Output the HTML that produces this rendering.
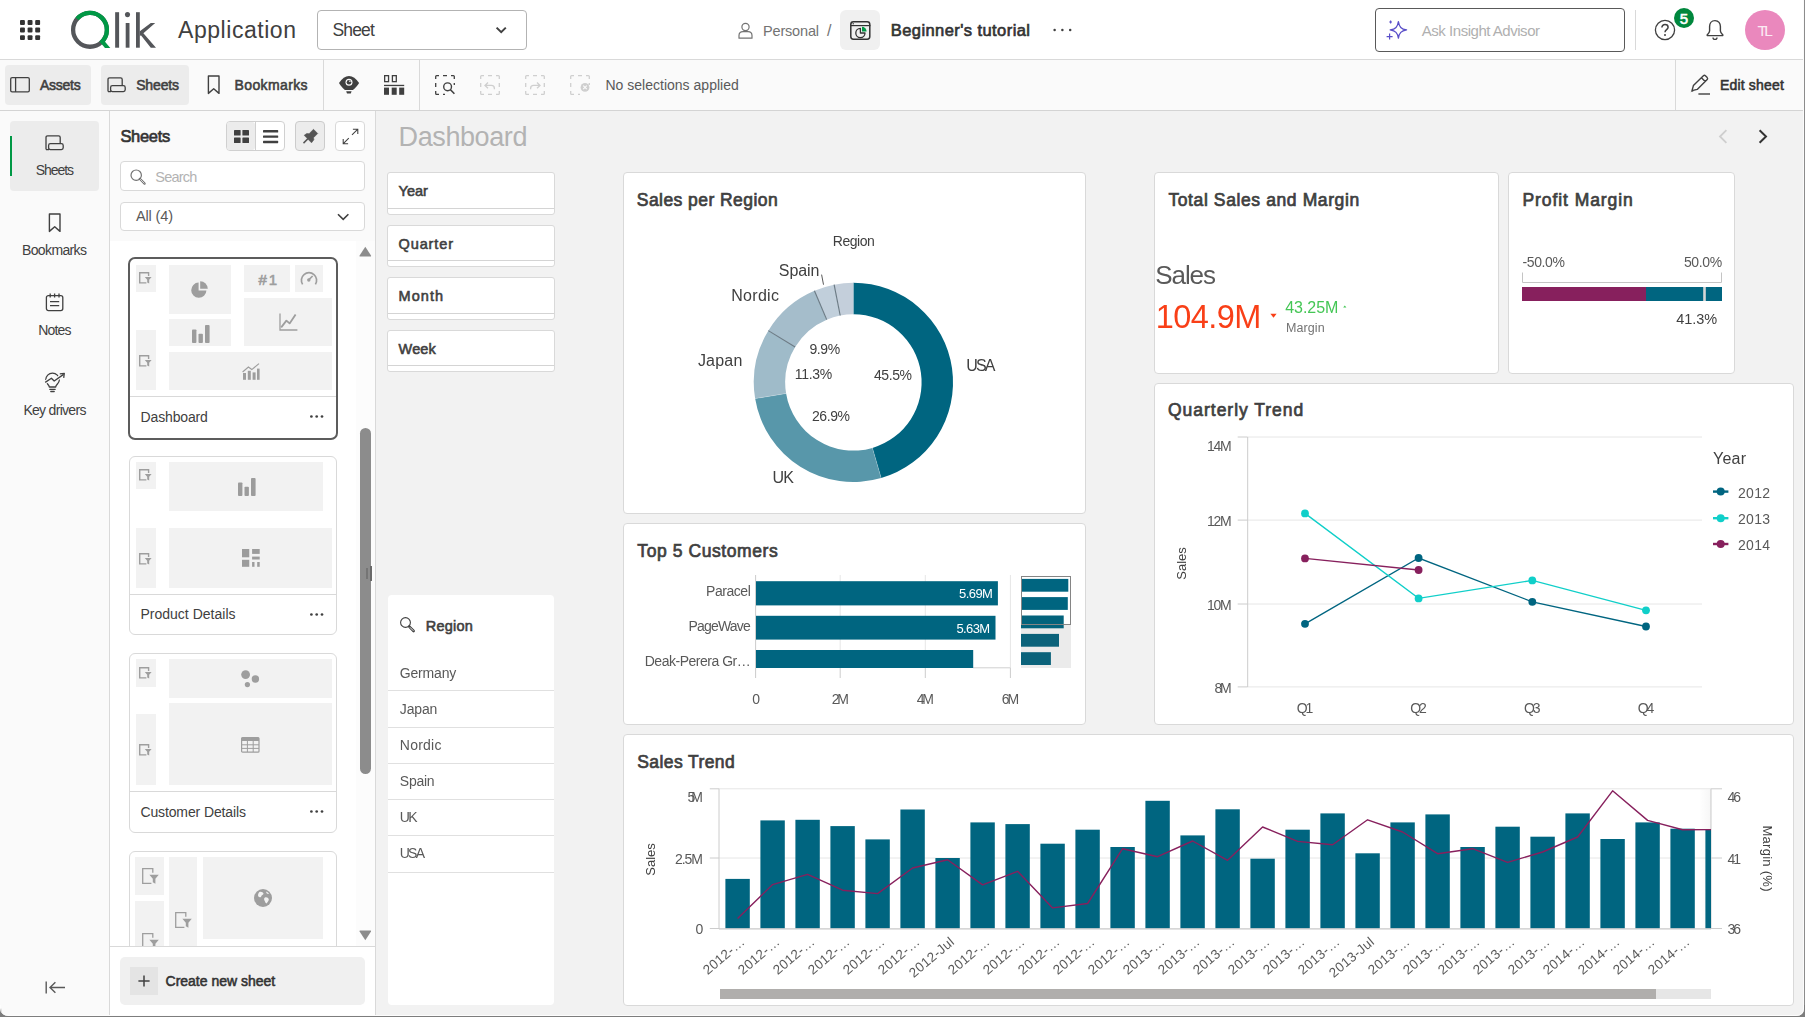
<!DOCTYPE html>
<html lang="en"><head><meta charset="utf-8"><title>Qlik Sense - Beginner's tutorial - Dashboard</title>
<style>
html,body{margin:0;padding:0;background:#f2f2f2;}
body{width:1805px;height:1017px;overflow:hidden;font-family:"Liberation Sans",sans-serif;}
#root{position:relative;width:1805px;height:1017px;overflow:hidden;background:#f2f2f2;}
.a{position:absolute;display:block;}
.t{position:absolute;white-space:nowrap;display:block;}
.g{position:absolute;left:0;top:0;width:1805px;height:1017px;will-change:transform;pointer-events:none;}
svg{overflow:visible;}
</style></head><body><div id="root">
<div class="a" style="left:0px;top:0px;width:1805px;height:59px;background:#ffffff;"></div>
<div class="a" style="left:0px;top:59px;width:1805px;height:1px;background:#d9d9d9;"></div>
<div class="a" style="left:0px;top:60px;width:1805px;height:50px;background:#fafafa;"></div>
<div class="a" style="left:0px;top:110px;width:1805px;height:1px;background:#d4d4d4;"></div>
<div class="a" style="left:0px;top:111px;width:109px;height:906px;background:#fafafa;"></div>
<div class="a" style="left:109px;top:111px;width:1px;height:906px;background:#d9d9d9;"></div>
<div class="a" style="left:110px;top:111px;width:265px;height:130px;background:#fafafa;"></div>
<div class="a" style="left:110px;top:241px;width:265px;height:705px;background:#ffffff;"></div>
<div class="a" style="left:356px;top:241px;width:19px;height:705px;background:#fcfcfc;"></div>
<div class="a" style="left:110px;top:946px;width:265px;height:1px;background:#d9d9d9;"></div>
<div class="a" style="left:110px;top:947px;width:265px;height:70px;background:#ffffff;"></div>
<div class="a" style="left:375px;top:111px;width:1px;height:906px;background:#d9d9d9;"></div>
<svg class="a" style="left:20px;top:20px;" width="21" height="21" viewBox="0 0 21 21"><rect x="0.0" y="0.0" width="4.9" height="4.9" rx="1" fill="#333"/><rect x="7.6" y="0.0" width="4.9" height="4.9" rx="1" fill="#333"/><rect x="15.2" y="0.0" width="4.9" height="4.9" rx="1" fill="#333"/><rect x="0.0" y="7.6" width="4.9" height="4.9" rx="1" fill="#333"/><rect x="7.6" y="7.6" width="4.9" height="4.9" rx="1" fill="#333"/><rect x="15.2" y="7.6" width="4.9" height="4.9" rx="1" fill="#333"/><rect x="0.0" y="15.2" width="4.9" height="4.9" rx="1" fill="#333"/><rect x="7.6" y="15.2" width="4.9" height="4.9" rx="1" fill="#333"/><rect x="15.2" y="15.2" width="4.9" height="4.9" rx="1" fill="#333"/></svg>
<svg class="a" style="left:0px;top:0px;" width="170" height="59" viewBox="0 0 170 59">
<circle cx="90.0" cy="29.83" r="16.9" fill="none" stroke="#54565a" stroke-width="4.3"/>
<path d="M77.05 18.97 A16.9 16.9 0 1 1 100.86 42.78" fill="none" stroke="#009845" stroke-width="4.3"/>
<path d="M99.3 41.3 L104.6 41.3 L110.3 47.9 L105.0 47.9 Z" fill="#009845"/>
<rect x="115.15" y="12.2" width="3.95" height="35.5" fill="#54565a"/>
<rect x="125.7" y="23" width="3.8" height="24.7" fill="#54565a"/>
<circle cx="127.5" cy="14.6" r="2.55" fill="#54565a"/>
<rect x="136.0" y="12.2" width="3.8" height="35.5" fill="#54565a"/>
<path d="M139.8 31.3 L150.8 23 L155.2 23 L143.4 33.2 L156 47.7 L150.8 47.7 L140.9 35.3 L139.8 36.2 Z" fill="#54565a"/>
</svg>
<span class="t" style="left:178.00px;top:18.75px;font-size:23px;line-height:23px;color:#404040;letter-spacing:0.548px;">Application</span>
<div class="a" style="left:317px;top:10px;width:210px;height:40px;background:#ffffff;border:1px solid #b3b3b3;box-sizing:border-box;border-radius:4px;"></div>
<span class="t" style="left:332.40px;top:21.50px;font-size:17.5px;line-height:17.5px;color:#404040;letter-spacing:-0.833px;">Sheet</span>
<svg class="a" style="left:494px;top:25px;" width="14" height="10" viewBox="0 0 14 10"><path d="M2.6 2.6 L7.2 7.2 L11.8 2.6" fill="none" stroke="#404040" stroke-width="2" stroke-linejoin="miter"/></svg>
<svg class="a" style="left:737px;top:21px;" width="17" height="19" viewBox="0 0 17 19"><circle cx="8.5" cy="6" r="3.6" fill="none" stroke="#737373" stroke-width="1.2"/><path d="M2 17.2 V14.6 Q2 10.6 6 10.6 H11 Q15 10.6 15 14.6 V17.2 Z" fill="none" stroke="#737373" stroke-width="1.2" stroke-linejoin="round"/></svg>
<span class="t" style="left:763.00px;top:24.00px;font-size:14.5px;line-height:14.5px;color:#737373;letter-spacing:-0.176px;">Personal</span>
<span class="t" style="left:827.00px;top:22.75px;font-size:16px;line-height:16px;color:#737373;">/</span>
<div class="a" style="left:840px;top:10px;width:40px;height:40px;background:#f0f0f0;border-radius:6px;"></div>
<svg class="a" style="left:849.6px;top:21px;" width="21" height="19" viewBox="0 0 21 19"><rect x="0.8" y="0.8" width="19" height="17.4" rx="2.6" fill="none" stroke="#333" stroke-width="1.5"/>
<path d="M1 4.6 H20.4" stroke="#333" stroke-width="1.2"/>
<circle cx="3.2" cy="2.8" r="0.7" fill="#333"/>
<path d="M10.4 7.4 A4.6 4.6 0 1 0 15 12 L10.4 12 Z" fill="none" stroke="#333" stroke-width="1.3" stroke-linejoin="round"/>
<path d="M12 5.8 L12 10.4 L16.6 10.4 A4.6 4.6 0 0 0 12 5.8 Z" fill="#009845"/></svg>
<span class="t" style="left:890.80px;top:22.00px;font-size:16.5px;line-height:16.5px;color:#333333;-webkit-text-stroke:0.66px #333333;letter-spacing:0.424px;">Beginner's tutorial</span>
<svg class="a" style="left:1053px;top:28px;" width="20" height="4" viewBox="0 0 20 4"><circle cx="1.6" cy="2" r="1.25" fill="#404040"/><circle cx="9.4" cy="2" r="1.25" fill="#404040"/><circle cx="17.2" cy="2" r="1.25" fill="#404040"/></svg>
<div class="a" style="left:1375px;top:8px;width:250px;height:44px;background:#ffffff;border:1px solid #595959;box-sizing:border-box;border-radius:4px;"></div>
<svg class="a" style="left:1385.7px;top:20px;" width="22" height="21" viewBox="0 0 22 21"><path d="M12.4 1.6 C13.2 7 15.2 9 20.6 9.9 C15.2 10.8 13.2 12.8 12.4 18.2 C11.6 12.8 9.6 10.8 4.2 9.9 C9.6 9 11.6 7 12.4 1.6 Z" fill="none" stroke="#5a4fc9" stroke-width="1.3" stroke-linejoin="round"/>
<path d="M3.6 13.6 V19.6 M0.6 16.6 H6.6" stroke="#5a4fc9" stroke-width="1.2"/>
<path d="M4.6 0.6 V3.4 M3.2 2 H6" stroke="#5a4fc9" stroke-width="1.1"/></svg>
<span class="t" style="left:1421.80px;top:23.25px;font-size:15px;line-height:15px;color:#b0b0b0;letter-spacing:-0.474px;">Ask Insight Advisor</span>
<div class="a" style="left:1635px;top:10px;width:1px;height:40px;background:#d9d9d9;"></div>
<svg class="a" style="left:1654px;top:19px;" width="22" height="22" viewBox="0 0 22 22"><circle cx="11" cy="11" r="9.6" fill="none" stroke="#404040" stroke-width="1.3"/><path d="M7.9 8.6 C7.9 6.6 9.3 5.6 11 5.6 C12.8 5.6 14.1 6.7 14.1 8.3 C14.1 10.6 11 10.7 11 13.2" fill="none" stroke="#404040" stroke-width="1.5"/><circle cx="11" cy="16" r="1" fill="#404040"/></svg>
<svg class="a" style="left:1674px;top:8px;" width="20" height="20" viewBox="0 0 20 20"><circle cx="10" cy="10" r="10" fill="#00873d"/></svg>
<span class="t" style="left:1679.80px;top:11.25px;font-size:15px;line-height:15px;color:#ffffff;-webkit-text-stroke:0.60px #ffffff;">5</span>
<svg class="a" style="left:1705px;top:19px;" width="20" height="22" viewBox="0 0 20 22"><path d="M10 1.6 C6.4 1.6 4.6 4.4 4.6 7.6 V12 C4.6 13.6 3.4 14.6 2.2 15.8 V16.6 H17.8 V15.8 C16.6 14.6 15.4 13.6 15.4 12 V7.6 C15.4 4.4 13.6 1.6 10 1.6 Z" fill="none" stroke="#404040" stroke-width="1.4" stroke-linejoin="round"/><path d="M8 18.4 A2 2 0 0 0 12 18.4" fill="none" stroke="#404040" stroke-width="1.3"/></svg>
<svg class="a" style="left:1745px;top:10px;" width="40" height="40" viewBox="0 0 40 40"><circle cx="20" cy="20" r="20" fill="#ea88bd"/></svg>
<span class="t" style="left:1757.60px;top:23.00px;font-size:15.5px;line-height:15.5px;color:#fbeaf3;letter-spacing:-2.689px;">TL</span>
<div class="a" style="left:5px;top:65px;width:86px;height:40px;background:#ececec;border-radius:4px;"></div>
<div class="a" style="left:101px;top:65px;width:88px;height:40px;background:#ececec;border-radius:4px;"></div>
<svg class="a" style="left:10px;top:77px;" width="20" height="16" viewBox="0 0 20 16"><rect x="0.7" y="0.7" width="18.6" height="14.2" rx="1.4" fill="none" stroke="#404040" stroke-width="1.3"/><path d="M5.6 0.7 V14.9" stroke="#404040" stroke-width="1.3"/></svg>
<span class="t" style="left:40.00px;top:78.25px;font-size:14px;line-height:14px;color:#404040;-webkit-text-stroke:0.56px #404040;letter-spacing:-0.263px;">Assets</span>
<svg class="a" style="left:105.5px;top:77px;" width="21" height="16" viewBox="0 0 21 16"><path d="M2 14.6 V2.4 Q2 0.8 3.6 0.8 H14.6 Q16.2 0.8 16.2 2.4 V8.4" fill="none" stroke="#404040" stroke-width="1.3"/><rect x="4.6" y="8.6" width="14.6" height="6" rx="1.8" fill="#ececec" stroke="#404040" stroke-width="1.3"/><path d="M2 14.6 H5" stroke="#404040" stroke-width="1.3"/></svg>
<span class="t" style="left:136.20px;top:78.25px;font-size:14px;line-height:14px;color:#404040;-webkit-text-stroke:0.56px #404040;letter-spacing:-0.157px;">Sheets</span>
<svg class="a" style="left:207px;top:75px;" width="14" height="20" viewBox="0 0 14 20"><path d="M1.4 1 H12 V18.4 L6.7 13.8 L1.4 18.4 Z" fill="none" stroke="#404040" stroke-width="1.4" stroke-linejoin="round"/></svg>
<span class="t" style="left:234.60px;top:78.25px;font-size:14px;line-height:14px;color:#404040;-webkit-text-stroke:0.56px #404040;letter-spacing:0.372px;">Bookmarks</span>
<div class="a" style="left:323px;top:60px;width:1px;height:50px;background:#d9d9d9;"></div>
<div class="a" style="left:419px;top:60px;width:1px;height:50px;background:#d9d9d9;"></div>
<svg class="a" style="left:339px;top:76px;" width="21" height="19" viewBox="0 0 21 19"><path d="M0 6.9 C3 2.4 6.4 0 10 0 C13.6 0 17 2.4 20.1 6.9 C18.4 9.6 16.4 12 13.9 13.9 H5.9 C3.6 12 1.6 9.6 0 6.9 Z" fill="#404040"/>
<circle cx="10" cy="6.3" r="3.5" fill="#fafafa"/><circle cx="10" cy="6.3" r="2.3" fill="#404040"/><circle cx="10.9" cy="5.3" r="0.8" fill="#fafafa"/>
<path d="M7.2 15.2 H12.6 L11.8 17.6 H8 Z" fill="#404040"/></svg>
<svg class="a" style="left:384px;top:75.2px;" width="21" height="20" viewBox="0 0 21 20"><rect x="0.65" y="0.65" width="3.9" height="6" fill="none" stroke="#404040" stroke-width="1.3"/><rect x="8.4" y="0.65" width="3.9" height="6" fill="none" stroke="#404040" stroke-width="1.3"/>
<rect x="0" y="9.8" width="20.2" height="1.3" fill="#404040"/>
<rect x="0" y="12.6" width="5" height="7.2" fill="#404040"/><rect x="7.7" y="12.6" width="5" height="7.2" fill="#404040"/><rect x="15.2" y="12.6" width="5" height="7.2" fill="#404040"/></svg>
<svg class="a" style="left:434.6px;top:75px;" width="21" height="21" viewBox="0 0 21 21"><path d="M0.7 4 V1.6 Q0.7 0.7 1.6 0.7 H4 M8 0.7 H12 M16 0.7 H18.4 Q19.3 0.7 19.3 1.6 V4 M0.7 8 V12 M19.3 8 V10 M0.7 16 V18.4 Q0.7 19.3 1.6 19.3 H4 M8 19.3 H10" fill="none" stroke="#404040" stroke-width="1.3"/><circle cx="12.6" cy="11.8" r="3.9" fill="none" stroke="#404040" stroke-width="1.4"/><path d="M15.5 14.8 L19.4 18.8" stroke="#404040" stroke-width="1.6"/></svg>
<svg class="a" style="left:480px;top:75px;" width="21" height="21" viewBox="0 0 21 21"><path d="M0.7 4 V1.6 Q0.7 0.7 1.6 0.7 H4 M8 0.7 H12 M16 0.7 H18.4 Q19.3 0.7 19.3 1.6 V4 M0.7 8 V12 M19.3 8 V12 M0.7 16 V18.4 Q0.7 19.3 1.6 19.3 H4 M8 19.3 H12 M16 19.3 H18.4 Q19.3 19.3 19.3 18.4 V16" fill="none" stroke="#cfcfcf" stroke-width="1.3"/><path d="M8 7.6 L5 10.4 L8 13.2 M5.2 10.4 H11.4 Q14.4 10.4 14.4 13.4 V14.2" fill="none" stroke="#cfcfcf" stroke-width="1.3"/></svg>
<svg class="a" style="left:525px;top:75px;" width="21" height="21" viewBox="0 0 21 21"><path d="M0.7 4 V1.6 Q0.7 0.7 1.6 0.7 H4 M8 0.7 H12 M16 0.7 H18.4 Q19.3 0.7 19.3 1.6 V4 M0.7 8 V12 M19.3 8 V12 M0.7 16 V18.4 Q0.7 19.3 1.6 19.3 H4 M8 19.3 H12 M16 19.3 H18.4 Q19.3 19.3 19.3 18.4 V16" fill="none" stroke="#cfcfcf" stroke-width="1.3"/><path d="M12 7.6 L15 10.4 L12 13.2 M14.8 10.4 H8.6 Q5.6 10.4 5.6 13.4 V14.2" fill="none" stroke="#cfcfcf" stroke-width="1.3"/></svg>
<svg class="a" style="left:570px;top:75px;" width="21" height="21" viewBox="0 0 21 21"><path d="M0.7 4 V1.6 Q0.7 0.7 1.6 0.7 H4 M8 0.7 H12 M16 0.7 H18.4 Q19.3 0.7 19.3 1.6 V4 M0.7 8 V12 M19.3 8 V10 M0.7 16 V18.4 Q0.7 19.3 1.6 19.3 H4 M8 19.3 H10" fill="none" stroke="#cfcfcf" stroke-width="1.3"/><circle cx="15" cy="12.4" r="4.4" fill="#cfcfcf"/><path d="M13.2 10.6 L16.8 14.2 M16.8 10.6 L13.2 14.2" stroke="#fafafa" stroke-width="1.2"/></svg>
<span class="t" style="left:605.40px;top:78.25px;font-size:14px;line-height:14px;color:#595959;letter-spacing:0.016px;">No selections applied</span>
<div class="a" style="left:1675px;top:60px;width:1px;height:50px;background:#d9d9d9;"></div>
<svg class="a" style="left:1689px;top:74px;" width="22" height="22" viewBox="0 0 22 22"><path d="M3 16.6 L4.4 11.6 L14.4 1.8 Q15.4 0.9 16.4 1.8 L18.2 3.6 Q19.1 4.6 18.2 5.6 L8.2 15.4 Z M12.4 3.8 L16.2 7.6" fill="none" stroke="#404040" stroke-width="1.4" stroke-linejoin="round"/><path d="M1.4 18.2 L3.4 16.4 L4.6 17.2 Z" fill="#404040"/><path d="M9.4 20 H21" stroke="#404040" stroke-width="1.4"/></svg>
<span class="t" style="left:1720.00px;top:78.25px;font-size:14px;line-height:14px;color:#333333;-webkit-text-stroke:0.56px #333333;letter-spacing:0.171px;">Edit sheet</span>
<div class="a" style="left:10px;top:121px;width:89px;height:70px;background:#ececec;border-radius:4px;"></div>
<div class="a" style="left:10px;top:136px;width:2px;height:40px;background:#009845;"></div>
<svg class="a" style="left:43.5px;top:135px;" width="21" height="16" viewBox="0 0 21 16"><path d="M2 14.6 V2.4 Q2 0.8 3.6 0.8 H14.6 Q16.2 0.8 16.2 2.4 V8.4" fill="none" stroke="#404040" stroke-width="1.3"/><rect x="4.6" y="8.6" width="14.6" height="6" rx="1.8" fill="#ececec" stroke="#404040" stroke-width="1.3"/><path d="M2 14.6 H5" stroke="#404040" stroke-width="1.3"/></svg>
<span class="t" style="left:35.70px;top:163.25px;font-size:14px;line-height:14px;color:#404040;letter-spacing:-1.057px;">Sheets</span>
<svg class="a" style="left:48.2px;top:213px;" width="14" height="20" viewBox="0 0 14 20"><path d="M1.4 1 H12 V18.4 L6.7 13.8 L1.4 18.4 Z" fill="none" stroke="#404040" stroke-width="1.4" stroke-linejoin="round"/></svg>
<span class="t" style="left:22.00px;top:243.25px;font-size:14px;line-height:14px;color:#404040;letter-spacing:-0.628px;">Bookmarks</span>
<svg class="a" style="left:45.4px;top:293px;" width="20" height="19" viewBox="0 0 20 19"><rect x="1.4" y="2.6" width="16.4" height="15" rx="2" fill="none" stroke="#404040" stroke-width="1.3"/>
<path d="M5.2 0.6 V4.4 M9.6 0.6 V4.4 M14 0.6 V4.4" stroke="#404040" stroke-width="1.3"/>
<path d="M5 8.6 H14.2 M5 12.6 H14.2" stroke="#404040" stroke-width="1.3"/></svg>
<span class="t" style="left:38.30px;top:323.25px;font-size:14px;line-height:14px;color:#404040;letter-spacing:-0.868px;">Notes</span>
<svg class="a" style="left:44px;top:372px;" width="22" height="21" viewBox="0 0 22 21"><path d="M5.3 15 C5.3 12.6 1.7 11.6 1.7 7.9 A6.8 6.8 0 0 1 15.3 7.9 C15.3 11.6 11.7 12.6 11.7 15 Z" fill="none" stroke="#404040" stroke-width="1.3" stroke-linejoin="round"/>
<path d="M5.8 17.3 H11.2 M6.8 19.5 H10.2" stroke="#404040" stroke-width="1.3" stroke-linecap="round"/>
<path d="M0.6 10.8 L7.4 6.2 L10.2 9 L19.8 2.3" fill="none" stroke="#fafafa" stroke-width="3.6"/>
<path d="M1.2 10.4 L7.4 6.2 L10.2 9 L19.6 2.4" fill="none" stroke="#404040" stroke-width="1.3" stroke-linejoin="round"/>
<path d="M15.8 1.8 L20.3 1.4 L19.7 5.9" fill="none" stroke="#404040" stroke-width="1.3" stroke-linejoin="round"/></svg>
<span class="t" style="left:23.40px;top:403.25px;font-size:14px;line-height:14px;color:#404040;letter-spacing:-0.702px;">Key drivers</span>
<svg class="a" style="left:45px;top:981px;" width="21" height="13" viewBox="0 0 21 13"><path d="M1.2 0.6 V12.4" stroke="#595959" stroke-width="1.4"/><path d="M20 6.5 H5 M10.4 1.2 L5 6.5 L10.4 11.8" fill="none" stroke="#595959" stroke-width="1.4"/></svg>
<span class="t" style="left:120.40px;top:128.00px;font-size:16.5px;line-height:16.5px;color:#333333;-webkit-text-stroke:0.66px #333333;letter-spacing:-0.294px;">Sheets</span>
<div class="a" style="left:226px;top:121px;width:59px;height:30px;background:#ffffff;border:1px solid #d0d0d0;box-sizing:border-box;border-radius:4px;"></div>
<div class="a" style="left:227px;top:122px;width:28px;height:28px;background:#ececec;border-radius:3px;"></div>
<div class="a" style="left:255px;top:122px;width:1px;height:28px;background:#d0d0d0;"></div>
<svg class="a" style="left:234px;top:130px;" width="15" height="13" viewBox="0 0 15 13"><rect x="0" y="0" width="6.6" height="5.6" rx="0.6" fill="#404040"/><rect x="8.4" y="0" width="6.6" height="5.6" rx="0.6" fill="#404040"/><rect x="0" y="7.4" width="6.6" height="5.6" rx="0.6" fill="#404040"/><rect x="8.4" y="7.4" width="6.6" height="5.6" rx="0.6" fill="#404040"/></svg>
<svg class="a" style="left:262.8px;top:130px;" width="16" height="14" viewBox="0 0 16 14"><rect x="0" y="0.1" width="15.2" height="2.4" rx="0.6" fill="#404040"/><rect x="0" y="5.4" width="15.2" height="2.4" rx="0.6" fill="#404040"/><rect x="0" y="10.8" width="15.2" height="2.4" rx="0.6" fill="#404040"/></svg>
<div class="a" style="left:295px;top:121px;width:30px;height:30px;background:#ececec;border:1px solid #cccccc;box-sizing:border-box;border-radius:4px;"></div>
<svg class="a" style="left:290px;top:118px;" width="40" height="36" viewBox="0 0 40 36"><path d="M14.2 17.3 L16.8 15.5 L19.1 15.7 L23.5 11.3 L27.7 15.5 L23.5 19.7 L23.9 21.7 L21.5 24.8 Z" fill="#555555" stroke="#555555" stroke-width="0.6" stroke-linejoin="round"/>
<path d="M13.5 25.1 L18 20.6" stroke="#555555" stroke-width="1.5"/></svg>
<div class="a" style="left:335px;top:121px;width:30px;height:30px;background:#ffffff;border:1px solid #d9d9d9;box-sizing:border-box;border-radius:4px;"></div>
<svg class="a" style="left:290px;top:118px;" width="80" height="36" viewBox="0 0 80 36"><path d="M62.0 16.9 L67.6 11.3 M62.9 11.2 H67.8 V16.0" fill="none" stroke="#404040" stroke-width="1.05"/><path d="M58.8 20.1 L53.3 25.6 M53.2 21.0 V25.8 H58.1" fill="none" stroke="#404040" stroke-width="1.05"/></svg>
<div class="a" style="left:120px;top:161px;width:245px;height:30px;background:#ffffff;border:1px solid #d9d9d9;box-sizing:border-box;border-radius:4px;"></div>
<svg class="a" style="left:129.6px;top:168.8px;" width="16" height="16" viewBox="0 0 16 16"><circle cx="6.2" cy="6.2" r="5.2" fill="none" stroke="#737373" stroke-width="1.2"/><path d="M9.8 9.8 L14.6 14.6" stroke="#737373" stroke-width="2.2" stroke-linecap="round"/><path d="M10.2 10.2 L14.4 14.4" stroke="#fff" stroke-width="0.7"/></svg>
<span class="t" style="left:155.30px;top:170.00px;font-size:14.5px;line-height:14.5px;color:#b3b3b3;letter-spacing:-0.789px;">Search</span>
<div class="a" style="left:120px;top:202px;width:245px;height:29px;background:#ffffff;border:1px solid #d9d9d9;box-sizing:border-box;border-radius:4px;"></div>
<span class="t" style="left:136.00px;top:209.00px;font-size:14.5px;line-height:14.5px;color:#595959;letter-spacing:-0.144px;">All (4)</span>
<svg class="a" style="left:336.5px;top:212.6px;" width="13" height="8" viewBox="0 0 13 8"><path d="M1 1.2 L6.2 6.4 L11.4 1.2" fill="none" stroke="#404040" stroke-width="1.6"/></svg>
<svg class="a" style="left:359px;top:246px;" width="13" height="11" viewBox="0 0 13 11"><path d="M6.3 0.8 L12 9.6 Q12.4 10.6 11.4 10.6 H1.2 Q0.2 10.6 0.6 9.6 Z" fill="#8c8c8c"/></svg>
<div class="a" style="left:360px;top:428px;width:11px;height:346px;background:#8c8c8c;border-radius:5.5px;"></div>
<div class="a" style="left:366px;top:568px;width:2px;height:11px;background:#757575;"></div>
<div class="a" style="left:370px;top:566px;width:1.5px;height:15px;background:#6a6a6a;"></div>
<svg class="a" style="left:359px;top:930px;" width="13" height="11" viewBox="0 0 13 11"><path d="M6.3 10.2 L12 1.4 Q12.4 0.4 11.4 0.4 H1.2 Q0.2 0.4 0.6 1.4 Z" fill="#8c8c8c"/></svg>
<div class="a" style="left:128px;top:257px;width:210px;height:183px;background:#ffffff;border:2px solid #5c5c5c;box-sizing:border-box;border-radius:7px;"></div>
<div class="a" style="left:136px;top:265px;width:20px;height:27px;background:#f2f2f2;"></div>
<div class="a" style="left:169px;top:265px;width:62px;height:49px;background:#f2f2f2;"></div>
<div class="a" style="left:244px;top:265px;width:46px;height:27px;background:#f2f2f2;"></div>
<div class="a" style="left:295px;top:265px;width:28px;height:27px;background:#f2f2f2;"></div>
<div class="a" style="left:244px;top:298px;width:88px;height:48px;background:#f2f2f2;"></div>
<div class="a" style="left:169px;top:319px;width:62px;height:27px;background:#f2f2f2;"></div>
<div class="a" style="left:136px;top:330px;width:20px;height:60px;background:#f2f2f2;"></div>
<div class="a" style="left:169px;top:352px;width:163px;height:38px;background:#f2f2f2;"></div>
<div class="a" style="left:130px;top:396px;width:206px;height:1px;background:#d9d9d9;"></div>
<svg class="a" style="left:138.8px;top:272px;" width="13.0" height="12.0" viewBox="0 0 13 12"><path d="M9.6 4 V0.7 H0.7 V10.9 H7.4" fill="none" stroke="#9e9e9e" stroke-width="1.4"/><path d="M5.8 5 H12.6 L10.2 7.8 V11.4 L8.2 10.4 V7.8 Z" fill="#9e9e9e"/></svg>
<svg class="a" style="left:138.8px;top:355px;" width="13.0" height="12.0" viewBox="0 0 13 12"><path d="M9.6 4 V0.7 H0.7 V10.9 H7.4" fill="none" stroke="#9e9e9e" stroke-width="1.4"/><path d="M5.8 5 H12.6 L10.2 7.8 V11.4 L8.2 10.4 V7.8 Z" fill="#9e9e9e"/></svg>
<svg class="a" style="left:191px;top:281px;" width="17" height="17" viewBox="0 0 17 17"><path d="M7.6 1.6 A7.6 7.6 0 1 0 15.4 9.4 L7.6 9.4 Z" fill="#9e9e9e"/><path d="M9.2 0.2 V7.8 H16.8 A7.6 7.6 0 0 0 9.2 0.2 Z" fill="#9e9e9e"/></svg>
<span class="t" style="left:258.60px;top:272.25px;font-size:15px;line-height:15px;color:#9e9e9e;-webkit-text-stroke:0.60px #9e9e9e;letter-spacing:1.915px;">#1</span>
<svg class="a" style="left:300px;top:271px;" width="18" height="15" viewBox="0 0 18 15"><path d="M2.6 13.4 A7.6 7.6 0 1 1 15.4 13.4" fill="none" stroke="#9e9e9e" stroke-width="1.7"/><path d="M8.2 9.4 L12.6 5" stroke="#9e9e9e" stroke-width="1.6"/><circle cx="8.8" cy="9" r="1.7" fill="#9e9e9e"/></svg>
<svg class="a" style="left:279px;top:313px;" width="19" height="18" viewBox="0 0 19 18"><path d="M1 0.4 V17 H18.4" fill="none" stroke="#9e9e9e" stroke-width="1.3"/><path d="M2.2 14.4 L7.4 7.6 L10.6 10.4 L16.6 1.6" fill="none" stroke="#9e9e9e" stroke-width="1.8" stroke-linejoin="round"/></svg>
<svg class="a" style="left:191.6px;top:324.6px;" width="18" height="18" viewBox="0 0 18 18"><rect x="0" y="4.4" width="4.4" height="13.5" rx="0.9" fill="#9c9c9c"/><rect x="6.5" y="8.7" width="4.4" height="9.2" rx="0.9" fill="#9c9c9c"/><rect x="13" y="0.1" width="4.6" height="17.8" rx="0.9" fill="#9c9c9c"/></svg>
<svg class="a" style="left:241.6px;top:363.4px;" width="18" height="17" viewBox="0 0 18 17"><rect x="1" y="10" width="3" height="6.8" fill="#9e9e9e"/><rect x="5.8" y="7.8" width="3" height="9" fill="#9e9e9e"/><rect x="10.6" y="9.4" width="3" height="7.4" fill="#9e9e9e"/><rect x="15" y="5.6" width="2.6" height="11.2" fill="#9e9e9e"/><path d="M0.6 9 L6.4 4 L9.8 6.6 L17 0.6" fill="none" stroke="#9e9e9e" stroke-width="1.2"/></svg>
<span class="t" style="left:140.60px;top:410.25px;font-size:14px;line-height:14px;color:#404040;letter-spacing:-0.161px;">Dashboard</span>
<svg class="a" style="left:309.8px;top:415px;" width="14" height="3" viewBox="0 0 14 3"><circle cx="1.4" cy="1.5" r="1.35" fill="#404040"/><circle cx="6.7" cy="1.5" r="1.35" fill="#404040"/><circle cx="12" cy="1.5" r="1.35" fill="#404040"/></svg>
<div class="a" style="left:129px;top:456px;width:208px;height:179px;background:#ffffff;border:1px solid #d9d9d9;box-sizing:border-box;border-radius:6px;"></div>
<div class="a" style="left:136px;top:462px;width:20px;height:27px;background:#f2f2f2;"></div>
<div class="a" style="left:169px;top:462px;width:154px;height:49px;background:#f2f2f2;"></div>
<div class="a" style="left:136px;top:528px;width:20px;height:60px;background:#f2f2f2;"></div>
<div class="a" style="left:169px;top:528px;width:163px;height:60px;background:#f2f2f2;"></div>
<div class="a" style="left:130px;top:594px;width:206px;height:1px;background:#d9d9d9;"></div>
<svg class="a" style="left:138.7px;top:469.4px;" width="13.0" height="12.0" viewBox="0 0 13 12"><path d="M9.6 4 V0.7 H0.7 V10.9 H7.4" fill="none" stroke="#9e9e9e" stroke-width="1.4"/><path d="M5.8 5 H12.6 L10.2 7.8 V11.4 L8.2 10.4 V7.8 Z" fill="#9e9e9e"/></svg>
<svg class="a" style="left:138.7px;top:553px;" width="13.0" height="12.0" viewBox="0 0 13 12"><path d="M9.6 4 V0.7 H0.7 V10.9 H7.4" fill="none" stroke="#9e9e9e" stroke-width="1.4"/><path d="M5.8 5 H12.6 L10.2 7.8 V11.4 L8.2 10.4 V7.8 Z" fill="#9e9e9e"/></svg>
<svg class="a" style="left:238px;top:478px;" width="18" height="18" viewBox="0 0 18 18"><rect x="0" y="4.4" width="4.4" height="13.5" rx="0.9" fill="#9c9c9c"/><rect x="6.5" y="8.7" width="4.4" height="9.2" rx="0.9" fill="#9c9c9c"/><rect x="13" y="0.1" width="4.6" height="17.8" rx="0.9" fill="#9c9c9c"/></svg>
<svg class="a" style="left:241.8px;top:548.9px;" width="18" height="18" viewBox="0 0 18 18"><rect x="0" y="0" width="7.25" height="8.3" fill="#9c9c9c"/><rect x="0" y="10.8" width="7.25" height="7" fill="#9c9c9c"/><rect x="10.1" y="0" width="7.6" height="4.9" fill="#9c9c9c"/><rect x="10.1" y="7.6" width="7.6" height="2.9" fill="#9c9c9c"/><rect x="10.1" y="13" width="2.4" height="4.8" fill="#9c9c9c"/><rect x="15.2" y="13" width="2.5" height="4.8" fill="#9c9c9c"/></svg>
<span class="t" style="left:140.40px;top:607.25px;font-size:14px;line-height:14px;color:#404040;letter-spacing:0.019px;">Product Details</span>
<svg class="a" style="left:309.8px;top:613px;" width="14" height="3" viewBox="0 0 14 3"><circle cx="1.4" cy="1.5" r="1.35" fill="#404040"/><circle cx="6.7" cy="1.5" r="1.35" fill="#404040"/><circle cx="12" cy="1.5" r="1.35" fill="#404040"/></svg>
<div class="a" style="left:129px;top:653px;width:208px;height:180px;background:#ffffff;border:1px solid #d9d9d9;box-sizing:border-box;border-radius:6px;"></div>
<div class="a" style="left:136px;top:659px;width:20px;height:28px;background:#f2f2f2;"></div>
<div class="a" style="left:169px;top:659px;width:163px;height:39px;background:#f2f2f2;"></div>
<div class="a" style="left:136px;top:714px;width:20px;height:71px;background:#f2f2f2;"></div>
<div class="a" style="left:169px;top:703px;width:163px;height:82px;background:#f2f2f2;"></div>
<div class="a" style="left:130px;top:791px;width:206px;height:1px;background:#d9d9d9;"></div>
<svg class="a" style="left:138.7px;top:667.3px;" width="13.0" height="12.0" viewBox="0 0 13 12"><path d="M9.6 4 V0.7 H0.7 V10.9 H7.4" fill="none" stroke="#9e9e9e" stroke-width="1.4"/><path d="M5.8 5 H12.6 L10.2 7.8 V11.4 L8.2 10.4 V7.8 Z" fill="#9e9e9e"/></svg>
<svg class="a" style="left:138.7px;top:743.5px;" width="13.0" height="12.0" viewBox="0 0 13 12"><path d="M9.6 4 V0.7 H0.7 V10.9 H7.4" fill="none" stroke="#9e9e9e" stroke-width="1.4"/><path d="M5.8 5 H12.6 L10.2 7.8 V11.4 L8.2 10.4 V7.8 Z" fill="#9e9e9e"/></svg>
<svg class="a" style="left:241.3px;top:669.6px;" width="19" height="18" viewBox="0 0 19 18"><circle cx="4.6" cy="4.6" r="4.4" fill="#9e9e9e"/><circle cx="14.4" cy="9" r="3.7" fill="#9e9e9e"/><circle cx="6.4" cy="14.6" r="2.6" fill="#9e9e9e"/></svg>
<svg class="a" style="left:241.3px;top:736.6px;" width="19" height="16" viewBox="0 0 19 16"><rect x="0.6" y="0.6" width="17.4" height="14.6" rx="1" fill="none" stroke="#9e9e9e" stroke-width="1.2"/><rect x="0.6" y="0.6" width="17.4" height="3.4" fill="#9e9e9e"/><path d="M0.6 7.8 H18 M0.6 11.4 H18 M6.4 4 V15 M12.2 4 V15" stroke="#9e9e9e" stroke-width="1"/></svg>
<span class="t" style="left:140.40px;top:805.25px;font-size:14px;line-height:14px;color:#404040;letter-spacing:-0.118px;">Customer Details</span>
<svg class="a" style="left:309.8px;top:810.4px;" width="14" height="3" viewBox="0 0 14 3"><circle cx="1.4" cy="1.5" r="1.35" fill="#404040"/><circle cx="6.7" cy="1.5" r="1.35" fill="#404040"/><circle cx="12" cy="1.5" r="1.35" fill="#404040"/></svg>
<div class="a" style="left:110px;top:840px;width:246px;height:106px;overflow:hidden;">
<div class="a" style="left:19px;top:11px;width:208px;height:180px;background:#fff;border:1px solid #d9d9d9;border-radius:6px;box-sizing:border-box;"></div>
<div class="a" style="left:25px;top:17px;width:29px;height:38px;background:#f2f2f2;"></div>
<div class="a" style="left:25px;top:61px;width:29px;height:59px;background:#f2f2f2;"></div>
<div class="a" style="left:59px;top:17px;width:28px;height:103px;background:#f2f2f2;"></div>
<div class="a" style="left:93px;top:17px;width:120px;height:82px;background:#f2f2f2;"></div>
</div>
<svg class="a" style="left:141.6px;top:867.9px;" width="17" height="17" viewBox="0 0 17 17"><path d="M10.8 4.8 V0.7 H0.7 V15.4 H9.4" fill="none" stroke="#9e9e9e" stroke-width="1.3"/><path d="M7.4 6.8 H16.8 L13.4 10.8 V15.8 L10.8 14.2 V10.8 Z" fill="#9e9e9e"/></svg>
<svg class="a" style="left:174.8px;top:911.6px;" width="17" height="17" viewBox="0 0 17 17"><path d="M10.8 4.8 V0.7 H0.7 V15.4 H9.4" fill="none" stroke="#9e9e9e" stroke-width="1.3"/><path d="M7.4 6.8 H16.8 L13.4 10.8 V15.8 L10.8 14.2 V10.8 Z" fill="#9e9e9e"/></svg>
<div class="a" style="left:141.6px;top:933px;width:18px;height:13px;overflow:hidden;"><svg width="17" height="17" viewBox="0 0 17 17" style="display:block"><path d="M10.8 4.8 V0.7 H0.7 V15.4 H9.4" fill="none" stroke="#9e9e9e" stroke-width="1.3"/><path d="M7.4 6.8 H16.8 L13.4 10.8 V15.8 L10.8 14.2 V10.8 Z" fill="#9e9e9e"/></svg></div>
<svg class="a" style="left:254px;top:888.5px;" width="18" height="18" viewBox="0 0 18 18"><circle cx="9" cy="9" r="9" fill="#9e9e9e"/><path d="M5.4 3 C7.4 2.4 9 3.4 9.6 4.8 C9 6 7.6 6.2 7.2 7.4 C6.6 8.6 5.2 8.6 4.4 7.6 C3.6 6.4 4.2 4 5.4 3 Z M11 8.4 C12.4 7.8 14.4 8.6 14.8 10.2 C14.8 12 13.4 13.2 12.6 14.4 C11.4 14.4 11.2 12.8 10.6 11.8 C10 10.6 9.8 9 11 8.4 Z M12.2 2.4 C13.4 2.8 14.6 3.8 15 5 C14.2 5.2 13 4.8 12.4 4 Z" fill="#f2f2f2"/></svg>
<div class="a" style="left:120px;top:957px;width:245px;height:48px;background:#f0f0f0;border-radius:5px;"></div>
<div class="a" style="left:130px;top:967px;width:28px;height:28px;background:#e4e4e4;"></div>
<svg class="a" style="left:138px;top:975.4px;" width="12" height="12" viewBox="0 0 12 12"><path d="M6 0.4 V11.6 M0.4 6 H11.6" stroke="#404040" stroke-width="1.5"/></svg>
<span class="t" style="left:165.60px;top:974.25px;font-size:14px;line-height:14px;color:#333333;-webkit-text-stroke:0.56px #333333;letter-spacing:-0.016px;">Create new sheet</span>
<span class="t" style="left:398.60px;top:123.75px;font-size:27px;line-height:27px;color:#b3b3b3;letter-spacing:-0.411px;">Dashboard</span>
<svg class="a" style="left:1718px;top:129px;" width="10" height="15" viewBox="0 0 10 15"><path d="M8.4 1.2 L2 7.5 L8.4 13.8" fill="none" stroke="#cfcfcf" stroke-width="1.8"/></svg>
<svg class="a" style="left:1758px;top:129px;" width="10" height="15" viewBox="0 0 10 15"><path d="M1.6 1.2 L8 7.5 L1.6 13.8" fill="none" stroke="#333333" stroke-width="2"/></svg>
<div class="a" style="left:387px;top:172px;width:168px;height:43px;background:#ffffff;border:1px solid #d9d9d9;box-sizing:border-box;border-radius:3px;"></div>
<div class="a" style="left:388px;top:208px;width:166px;height:1px;background:#d4d4d4;"></div>
<span class="t" style="left:398.60px;top:184.00px;font-size:14.5px;line-height:14.5px;color:#404040;-webkit-text-stroke:0.58px #404040;letter-spacing:-0.033px;">Year</span>
<div class="a" style="left:387px;top:225px;width:168px;height:42px;background:#ffffff;border:1px solid #d9d9d9;box-sizing:border-box;border-radius:3px;"></div>
<div class="a" style="left:388px;top:260px;width:166px;height:1px;background:#d4d4d4;"></div>
<span class="t" style="left:398.60px;top:237.00px;font-size:14.5px;line-height:14.5px;color:#404040;-webkit-text-stroke:0.58px #404040;letter-spacing:0.874px;">Quarter</span>
<div class="a" style="left:387px;top:277px;width:168px;height:43px;background:#ffffff;border:1px solid #d9d9d9;box-sizing:border-box;border-radius:3px;"></div>
<div class="a" style="left:388px;top:313px;width:166px;height:1px;background:#d4d4d4;"></div>
<span class="t" style="left:398.60px;top:289.00px;font-size:14.5px;line-height:14.5px;color:#404040;-webkit-text-stroke:0.58px #404040;letter-spacing:1.025px;">Month</span>
<div class="a" style="left:387px;top:330px;width:168px;height:42px;background:#ffffff;border:1px solid #d9d9d9;box-sizing:border-box;border-radius:3px;"></div>
<div class="a" style="left:388px;top:365px;width:166px;height:1px;background:#d4d4d4;"></div>
<span class="t" style="left:398.60px;top:342.00px;font-size:14.5px;line-height:14.5px;color:#404040;-webkit-text-stroke:0.58px #404040;letter-spacing:0.132px;">Week</span>
<div class="a" style="left:623px;top:172px;width:463px;height:342px;background:#ffffff;border:1px solid #d9d9d9;box-sizing:border-box;border-radius:4px;"></div>
<span class="t" style="left:636.80px;top:191.50px;font-size:17.5px;line-height:17.5px;color:#404040;-webkit-text-stroke:0.70px #404040;letter-spacing:0.443px;">Sales per Region</span>
<svg class="a" style="left:0px;top:0px;" width="1805" height="1017" viewBox="0 0 1805 1017"><path d="M853.40 282.80 A99.6 99.6 0 0 1 881.19 478.05 L872.43 447.89 A68.2 68.2 0 0 0 853.40 314.20 Z" fill="#006580"/><path d="M881.19 478.05 A99.6 99.6 0 0 1 755.13 398.60 L786.11 393.49 A68.2 68.2 0 0 0 872.43 447.89 Z" fill="#5897aa"/><path d="M755.13 398.60 A99.6 99.6 0 0 1 768.31 330.63 L795.14 346.95 A68.2 68.2 0 0 0 786.11 393.49 Z" fill="#9fbbc9"/><path d="M768.31 330.63 A99.6 99.6 0 0 1 814.42 290.74 L826.71 319.64 A68.2 68.2 0 0 0 795.14 346.95 Z" fill="#a5bdcb"/><path d="M814.42 290.74 A99.6 99.6 0 0 1 834.12 284.68 L840.20 315.49 A68.2 68.2 0 0 0 826.71 319.64 Z" fill="#c1cfdb"/><path d="M834.12 284.68 A99.6 99.6 0 0 1 853.40 282.80 L853.40 314.20 A68.2 68.2 0 0 0 840.20 315.49 Z" fill="#c4cfdb"/><path d="M768.31 330.63 L795.14 346.95" stroke="#6b7a84" stroke-width="1.15"/><path d="M814.42 290.74 L826.71 319.64" stroke="#6b7a84" stroke-width="1.15"/><path d="M834.12 284.68 L840.20 315.49" stroke="#6b7a84" stroke-width="1.15"/><path d="M881.19 478.05 L872.43 447.89" stroke="#ffffff" stroke-opacity="0.35" stroke-width="0.6"/><path d="M755.13 398.60 L786.11 393.49" stroke="#ffffff" stroke-opacity="0.35" stroke-width="0.6"/><path d="M821.6 274.6 L823.5 284.7" stroke="#595959" stroke-width="1"/></svg>
<div class="g">
<span class="t" style="left:832.80px;top:234.25px;font-size:14px;line-height:14px;color:#404040;letter-spacing:-0.473px;">Region</span>
<span class="t" style="left:778.80px;top:262.75px;font-size:16px;line-height:16px;color:#404040;letter-spacing:-0.056px;">Spain</span>
<span class="t" style="left:731.20px;top:287.75px;font-size:16px;line-height:16px;color:#404040;letter-spacing:0.313px;">Nordic</span>
<span class="t" style="left:697.90px;top:352.75px;font-size:16px;line-height:16px;color:#404040;letter-spacing:0.201px;">Japan</span>
<span class="t" style="left:966.30px;top:357.75px;font-size:16px;line-height:16px;color:#404040;letter-spacing:-1.850px;">USA</span>
<span class="t" style="left:772.40px;top:469.75px;font-size:16px;line-height:16px;color:#404040;letter-spacing:-0.627px;">UK</span>
<span class="t" style="left:809.40px;top:342.25px;font-size:14px;line-height:14px;color:#404040;letter-spacing:-0.370px;">9.9%</span>
<span class="t" style="left:794.70px;top:367.25px;font-size:14px;line-height:14px;color:#404040;letter-spacing:-0.289px;">11.3%</span>
<span class="t" style="left:874.00px;top:368.25px;font-size:14px;line-height:14px;color:#404040;letter-spacing:-0.424px;">45.5%</span>
<span class="t" style="left:812.00px;top:409.25px;font-size:14px;line-height:14px;color:#404040;letter-spacing:-0.424px;">26.9%</span>
</div>
<div class="a" style="left:623px;top:523px;width:463px;height:202px;background:#ffffff;border:1px solid #d9d9d9;box-sizing:border-box;border-radius:4px;"></div>
<span class="t" style="left:637.30px;top:542.50px;font-size:17.5px;line-height:17.5px;color:#404040;-webkit-text-stroke:0.70px #404040;letter-spacing:0.580px;">Top 5 Customers</span>
<svg class="a" style="left:0px;top:0px;" width="1805" height="1017" viewBox="0 0 1805 1017"><path d="M840.2 575 V668" stroke="#e6e6e6" stroke-width="1"/><path d="M925.3 575 V668" stroke="#e6e6e6" stroke-width="1"/><path d="M1010.4 575 V668" stroke="#e6e6e6" stroke-width="1"/><path d="M755.6 575 V678" stroke="#cccccc" stroke-width="1"/><path d="M840.2 668 V678 M925.3 668 V678 M1010.4 668 V678" stroke="#cccccc" stroke-width="1"/><path d="M973 667.8 H1010.4" stroke="#d0d0d0" stroke-width="1"/><rect x="756" y="581.2" width="241.9" height="24.2" fill="#006580"/><rect x="756" y="615.8" width="239.5" height="23.8" fill="#006580"/><rect x="756" y="650" width="217.2" height="18" fill="#006580"/><rect x="1021" y="576" width="50" height="92" fill="#ebebeb"/><rect x="1021" y="576" width="50" height="48.6" fill="#ffffff"/><rect x="1021" y="578.9" width="47.3" height="12.8" fill="#006580"/><rect x="1021" y="597.1" width="46.8" height="12.8" fill="#006580"/><rect x="1021" y="615.5" width="42.7" height="12.8" fill="#04637c"/><rect x="1021" y="633.9" width="38.0" height="12.8" fill="#0b627a"/><rect x="1021" y="652.2" width="29.9" height="12.8" fill="#0b627a"/><rect x="1021.5" y="576.5" width="49" height="48" fill="none" stroke="#858585" stroke-width="1"/></svg>
<div class="g">
<span class="t" style="left:706.00px;top:584.25px;font-size:14px;line-height:14px;color:#595959;letter-spacing:-0.445px;">Paracel</span>
<span class="t" style="left:688.40px;top:619.25px;font-size:14px;line-height:14px;color:#595959;letter-spacing:-0.795px;">PageWave</span>
<span class="t" style="left:644.70px;top:654.25px;font-size:14px;line-height:14px;color:#595959;letter-spacing:-0.479px;">Deak-Perera Gr…</span>
<span class="t" style="left:959.00px;top:587.25px;font-size:13px;line-height:13px;color:#ffffff;letter-spacing:-0.558px;">5.69M</span>
<span class="t" style="left:956.40px;top:622.25px;font-size:13px;line-height:13px;color:#ffffff;letter-spacing:-0.583px;">5.63M</span>
<span class="t" style="left:752.20px;top:692.25px;font-size:14px;line-height:14px;color:#595959;">0</span>
<span class="t" style="left:831.80px;top:692.25px;font-size:14px;line-height:14px;color:#595959;letter-spacing:-2.449px;">2M</span>
<span class="t" style="left:916.80px;top:692.25px;font-size:14px;line-height:14px;color:#595959;letter-spacing:-2.249px;">4M</span>
<span class="t" style="left:1001.80px;top:692.25px;font-size:14px;line-height:14px;color:#595959;letter-spacing:-2.049px;">6M</span>
</div>
<div class="a" style="left:388px;top:595px;width:166px;height:410px;background:#ffffff;border-radius:4px;"></div>
<svg class="a" style="left:400px;top:616.8px;" width="16" height="16" viewBox="0 0 16 16"><circle cx="5.5" cy="5.5" r="4.9" fill="none" stroke="#404040" stroke-width="1.1"/><path d="M9.3 9.7 L13.6 14" stroke="#404040" stroke-width="2.6" stroke-linecap="round"/><path d="M9.9 10.3 L13.4 13.8" stroke="#fff" stroke-width="0.9"/></svg>
<span class="t" style="left:425.70px;top:619.00px;font-size:14.5px;line-height:14.5px;color:#404040;-webkit-text-stroke:0.58px #404040;letter-spacing:0.250px;">Region</span>
<div class="g">
<span class="t" style="left:399.80px;top:666.25px;font-size:14px;line-height:14px;color:#595959;letter-spacing:-0.179px;">Germany</span>
<span class="t" style="left:399.80px;top:702.25px;font-size:14px;line-height:14px;color:#595959;letter-spacing:-0.136px;">Japan</span>
<span class="t" style="left:399.80px;top:738.25px;font-size:14px;line-height:14px;color:#595959;letter-spacing:0.229px;">Nordic</span>
<span class="t" style="left:399.80px;top:774.25px;font-size:14px;line-height:14px;color:#595959;letter-spacing:-0.252px;">Spain</span>
<span class="t" style="left:399.80px;top:810.25px;font-size:14px;line-height:14px;color:#595959;letter-spacing:-1.649px;">UK</span>
<span class="t" style="left:399.80px;top:846.25px;font-size:14px;line-height:14px;color:#595959;letter-spacing:-1.794px;">USA</span>
</div>
<div class="a" style="left:388px;top:690px;width:166px;height:1px;background:#e0e0e0;"></div>
<div class="a" style="left:388px;top:727px;width:166px;height:1px;background:#e0e0e0;"></div>
<div class="a" style="left:388px;top:763px;width:166px;height:1px;background:#e0e0e0;"></div>
<div class="a" style="left:388px;top:799px;width:166px;height:1px;background:#e0e0e0;"></div>
<div class="a" style="left:388px;top:835px;width:166px;height:1px;background:#e0e0e0;"></div>
<div class="a" style="left:388px;top:872px;width:166px;height:1px;background:#e0e0e0;"></div>
<div class="a" style="left:1154px;top:172px;width:345px;height:202px;background:#ffffff;border:1px solid #d9d9d9;box-sizing:border-box;border-radius:4px;"></div>
<span class="t" style="left:1168.40px;top:191.50px;font-size:17.5px;line-height:17.5px;color:#404040;-webkit-text-stroke:0.70px #404040;letter-spacing:0.609px;">Total Sales and Margin</span>
<div class="g">
<span class="t" style="left:1155.30px;top:262.25px;font-size:26px;line-height:26px;color:#595959;letter-spacing:-1.085px;">Sales</span>
<span class="t" style="left:1155.80px;top:301.00px;font-size:32.5px;line-height:32.5px;color:#f93f17;letter-spacing:-0.581px;">104.9M</span>
<svg class="a" style="left:1270px;top:313px;" width="8" height="6" viewBox="0 0 8 6"><path d="M0.4 0.8 H6.6 L3.5 4.8 Z" fill="#f93f17"/></svg>
<span class="t" style="left:1285.20px;top:299.75px;font-size:16px;line-height:16px;color:#44c655;letter-spacing:-0.034px;">43.25M</span>
<svg class="a" style="left:1342.6px;top:305.2px;" width="4" height="3" viewBox="0 0 4 3"><path d="M0.2 2.4 L1.8 0.4 L3.4 2.4 Z" fill="#44c655"/></svg>
<span class="t" style="left:1286.00px;top:322.00px;font-size:12.5px;line-height:12.5px;color:#737373;letter-spacing:0.078px;">Margin</span>
</div>
<div class="a" style="left:1508px;top:172px;width:227px;height:202px;background:#ffffff;border:1px solid #d9d9d9;box-sizing:border-box;border-radius:4px;"></div>
<span class="t" style="left:1522.50px;top:191.50px;font-size:17.5px;line-height:17.5px;color:#404040;-webkit-text-stroke:0.70px #404040;letter-spacing:0.925px;">Profit Margin</span>
<div class="g">
<span class="t" style="left:1522.50px;top:255.25px;font-size:14px;line-height:14px;color:#595959;letter-spacing:-0.392px;">-50.0%</span>
<span class="t" style="left:1683.90px;top:255.25px;font-size:14px;line-height:14px;color:#595959;letter-spacing:-0.374px;">50.0%</span>
</div>
<svg class="a" style="left:0px;top:0px;" width="1805" height="1017" viewBox="0 0 1805 1017"><path d="M1522.5 272.5 V282.5 H1721.5 V272.5" fill="none" stroke="#c4c4c4" stroke-width="1"/><rect x="1522" y="287" width="124" height="14" fill="#87205d"/><rect x="1646" y="287" width="76" height="14" fill="#006580"/><rect x="1703.2" y="287" width="2.6" height="14" fill="#d6d6d6"/></svg>
<div class="g">
<span class="t" style="left:1676.30px;top:312.00px;font-size:14.5px;line-height:14.5px;color:#404040;letter-spacing:-0.054px;">41.3%</span>
</div>
<div class="a" style="left:1154px;top:383px;width:640px;height:342px;background:#ffffff;border:1px solid #d9d9d9;box-sizing:border-box;border-radius:4px;"></div>
<span class="t" style="left:1168.00px;top:401.50px;font-size:17.5px;line-height:17.5px;color:#404040;-webkit-text-stroke:0.70px #404040;letter-spacing:0.973px;">Quarterly Trend</span>
<svg class="a" style="left:0px;top:0px;" width="1805" height="1017" viewBox="0 0 1805 1017"><path d="M1248 437 H1702" stroke="#e6e6e6" stroke-width="1"/><path d="M1248 520.1 H1702" stroke="#e6e6e6" stroke-width="1"/><path d="M1248 604 H1702" stroke="#e6e6e6" stroke-width="1"/><path d="M1248 686.9 H1702" stroke="#e6e6e6" stroke-width="1"/><path d="M1247.7 437 V687" stroke="#cccccc" stroke-width="1"/><path d="M1237.7 437 H1247.7" stroke="#cccccc" stroke-width="1"/><path d="M1237.7 520.1 H1247.7" stroke="#cccccc" stroke-width="1"/><path d="M1237.7 604 H1247.7" stroke="#cccccc" stroke-width="1"/><path d="M1237.7 686.9 H1247.7" stroke="#cccccc" stroke-width="1"/><polyline points="1305,623.8 1418.6,558 1532.3,601.8 1646,626.5" fill="none" stroke="#006580" stroke-width="1.35"/><polyline points="1305,513.4 1418.6,598.4 1532.3,580.4 1646,610.3" fill="none" stroke="#10cfc9" stroke-width="1.35"/><polyline points="1305,558.4 1418.6,570" fill="none" stroke="#87205d" stroke-width="1.35"/><circle cx="1305" cy="623.8" r="3.9" fill="#006580"/><circle cx="1418.6" cy="558" r="3.9" fill="#006580"/><circle cx="1532.3" cy="601.8" r="3.9" fill="#006580"/><circle cx="1646" cy="626.5" r="3.9" fill="#006580"/><circle cx="1305" cy="513.4" r="3.9" fill="#10cfc9"/><circle cx="1418.6" cy="598.4" r="3.9" fill="#10cfc9"/><circle cx="1532.3" cy="580.4" r="3.9" fill="#10cfc9"/><circle cx="1646" cy="610.3" r="3.9" fill="#10cfc9"/><circle cx="1305" cy="558.4" r="3.9" fill="#87205d"/><circle cx="1418.6" cy="570" r="3.9" fill="#87205d"/><path d="M1713 491.6 H1728.4" stroke="#006580" stroke-width="2.4"/><circle cx="1720.7" cy="491.6" r="4" fill="#006580"/><path d="M1713 518.2 H1728.4" stroke="#10cfc9" stroke-width="2.4"/><circle cx="1720.7" cy="518.2" r="4" fill="#10cfc9"/><path d="M1713 544 H1728.4" stroke="#87205d" stroke-width="2.4"/><circle cx="1720.7" cy="544" r="4" fill="#87205d"/></svg>
<div class="g">
<span class="t" style="left:1207.00px;top:439.25px;font-size:14px;line-height:14px;color:#595959;letter-spacing:-1.268px;">14M</span>
<span class="t" style="left:1207.00px;top:514.25px;font-size:14px;line-height:14px;color:#595959;letter-spacing:-1.268px;">12M</span>
<span class="t" style="left:1207.00px;top:598.25px;font-size:14px;line-height:14px;color:#595959;letter-spacing:-1.268px;">10M</span>
<span class="t" style="left:1214.60px;top:681.25px;font-size:14px;line-height:14px;color:#595959;letter-spacing:-2.349px;">8M</span>
<span class="t" style="left:1296.70px;top:701.25px;font-size:14px;line-height:14px;color:#595959;letter-spacing:-2.076px;">Q1</span>
<span class="t" style="left:1410.30px;top:701.25px;font-size:14px;line-height:14px;color:#595959;letter-spacing:-2.076px;">Q2</span>
<span class="t" style="left:1524.00px;top:701.25px;font-size:14px;line-height:14px;color:#595959;letter-spacing:-2.076px;">Q3</span>
<span class="t" style="left:1637.70px;top:701.25px;font-size:14px;line-height:14px;color:#595959;letter-spacing:-2.076px;">Q4</span>
<span class="t" style="left:1713.00px;top:450.75px;font-size:16px;line-height:16px;color:#404040;letter-spacing:0.223px;">Year</span>
<span class="t" style="left:1738.00px;top:486.25px;font-size:14px;line-height:14px;color:#595959;letter-spacing:0.285px;">2012</span>
<span class="t" style="left:1738.00px;top:512.25px;font-size:14px;line-height:14px;color:#595959;letter-spacing:0.285px;">2013</span>
<span class="t" style="left:1738.00px;top:538.25px;font-size:14px;line-height:14px;color:#595959;letter-spacing:0.285px;">2014</span>
<span class="t" style="left:1165.25px;top:557.00px;width:32.50px;font-size:13px;line-height:13px;color:#404040;letter-spacing:-0.005px;transform:rotate(-90deg);transform-origin:50% 50%;">Sales</span>
</div>
<div class="a" style="left:623px;top:734px;width:1171px;height:272px;background:#ffffff;border:1px solid #d9d9d9;box-sizing:border-box;border-radius:4px;"></div>
<span class="t" style="left:637.30px;top:753.50px;font-size:17.5px;line-height:17.5px;color:#404040;-webkit-text-stroke:0.70px #404040;letter-spacing:0.401px;">Sales Trend</span>
<svg class="a" style="left:0px;top:0px;" width="1805" height="1017" viewBox="0 0 1805 1017"><path d="M719 788.8 H1711" stroke="#e6e6e6" stroke-width="1"/><path d="M719 858 H1711" stroke="#e6e6e6" stroke-width="1"/><path d="M719 788.8 V929" stroke="#cccccc" stroke-width="1"/><path d="M1711 788.8 V929" stroke="#cccccc" stroke-width="1"/><path d="M709.8 788.8 H719 M1711 788.8 H1722" stroke="#cccccc" stroke-width="1"/><path d="M709.8 858 H719 M1711 858 H1722" stroke="#cccccc" stroke-width="1"/><path d="M709.8 928.5 H719 M1711 928.5 H1722" stroke="#cccccc" stroke-width="1"/><defs><linearGradient id="fd" x1="0" x2="1" y1="0" y2="0"><stop offset="0" stop-color="#000" stop-opacity="0"/><stop offset="1" stop-color="#000" stop-opacity="0.035"/></linearGradient></defs><rect x="1699" y="789.5" width="12" height="138.5" fill="url(#fd)"/><rect x="725.4" y="878.9" width="24.4" height="49.6" fill="#006580"/><rect x="760.4" y="820.4" width="24.4" height="108.1" fill="#006580"/><rect x="795.4" y="819.8" width="24.4" height="108.7" fill="#006580"/><rect x="830.4" y="826.1" width="24.4" height="102.4" fill="#006580"/><rect x="865.4" y="839.4" width="24.4" height="89.1" fill="#006580"/><rect x="900.4" y="809.5" width="24.4" height="119.0" fill="#006580"/><rect x="935.4" y="858" width="24.4" height="70.5" fill="#006580"/><rect x="970.4" y="822.4" width="24.4" height="106.1" fill="#006580"/><rect x="1005.4" y="824.1" width="24.4" height="104.4" fill="#006580"/><rect x="1040.4" y="843.7" width="24.4" height="84.8" fill="#006580"/><rect x="1075.4" y="829.7" width="24.4" height="98.8" fill="#006580"/><rect x="1110.4" y="847" width="24.4" height="81.5" fill="#006580"/><rect x="1145.4" y="800.8" width="24.4" height="127.7" fill="#006580"/><rect x="1180.4" y="835.4" width="24.4" height="93.1" fill="#006580"/><rect x="1215.4" y="809.3" width="24.4" height="119.2" fill="#006580"/><rect x="1250.4" y="858.7" width="24.4" height="69.8" fill="#006580"/><rect x="1285.4" y="829.7" width="24.4" height="98.8" fill="#006580"/><rect x="1320.4" y="813.4" width="24.4" height="115.1" fill="#006580"/><rect x="1355.4" y="853.3" width="24.4" height="75.2" fill="#006580"/><rect x="1390.4" y="822.4" width="24.4" height="106.1" fill="#006580"/><rect x="1425.4" y="814.4" width="24.4" height="114.1" fill="#006580"/><rect x="1460.4" y="847" width="24.4" height="81.5" fill="#006580"/><rect x="1495.4" y="826.7" width="24.4" height="101.8" fill="#006580"/><rect x="1530.4" y="836.7" width="24.4" height="91.8" fill="#006580"/><rect x="1565.4" y="813.4" width="24.4" height="115.1" fill="#006580"/><rect x="1600.4" y="839" width="24.4" height="89.5" fill="#006580"/><rect x="1635.4" y="822.4" width="24.4" height="106.1" fill="#006580"/><rect x="1670.4" y="828.7" width="24.4" height="99.8" fill="#006580"/><rect x="1705.4" y="829.4" width="5.6" height="99.1" fill="#006580"/><path d="M719 928.8 H1711" stroke="#c8c8c8" stroke-width="1.2"/><polyline points="737.6,918.5 772.6,884.6 807.6,874.3 842.6,890.2 877.6,893.6 912.6,868 947.6,859.7 982.6,884.9 1017.6,871.3 1052.6,907.9 1087.6,903.5 1122.6,848.7 1157.6,856.7 1192.6,841 1227.6,860.3 1262.6,827 1297.6,841.4 1332.6,844.7 1367.6,819.8 1402.6,832 1437.6,853.7 1472.6,848.7 1507.6,862.3 1542.6,852 1577.6,837 1612.6,790.8 1647.6,820.4 1682.6,829.7 1711,829.6" fill="none" stroke="#87205d" stroke-width="1.4" stroke-linejoin="round"/><rect x="720" y="989" width="991" height="10" fill="#e6e6e6"/><rect x="720" y="989" width="936" height="10" fill="#b0aeac"/></svg>
<div class="g">
<span class="t" style="left:687.50px;top:790.25px;font-size:14px;line-height:14px;color:#595959;letter-spacing:-3.949px;">5M</span>
<span class="t" style="left:674.90px;top:852.25px;font-size:14px;line-height:14px;color:#595959;letter-spacing:-1.008px;">2.5M</span>
<span class="t" style="left:695.60px;top:922.25px;font-size:14px;line-height:14px;color:#595959;">0</span>
<span class="t" style="left:1727.60px;top:790.25px;font-size:14px;line-height:14px;color:#595959;letter-spacing:-2.173px;">46</span>
<span class="t" style="left:1727.60px;top:852.25px;font-size:14px;line-height:14px;color:#595959;letter-spacing:-2.173px;">41</span>
<span class="t" style="left:1727.60px;top:922.25px;font-size:14px;line-height:14px;color:#595959;letter-spacing:-2.173px;">36</span>
<span class="t" style="left:633.75px;top:852.50px;width:32.50px;font-size:13px;line-height:13px;color:#404040;letter-spacing:-0.005px;transform:rotate(-90deg);transform-origin:50% 50%;">Sales</span>
<span class="t" style="left:1733.80px;top:851.80px;width:66.00px;font-size:13px;line-height:13px;color:#404040;letter-spacing:0.270px;transform:rotate(90deg);transform-origin:50% 50%;">Margin (%)</span>
<span class="t" style="left:688.60px;top:934.50px;width:49.5px;font-size:13.5px;line-height:13.5px;color:#595959;letter-spacing:0.294px;transform:rotate(-40deg);transform-origin:100% 0%;">2012-…</span>
<span class="t" style="left:723.60px;top:934.50px;width:49.5px;font-size:13.5px;line-height:13.5px;color:#595959;letter-spacing:0.294px;transform:rotate(-40deg);transform-origin:100% 0%;">2012-…</span>
<span class="t" style="left:758.60px;top:934.50px;width:49.5px;font-size:13.5px;line-height:13.5px;color:#595959;letter-spacing:0.294px;transform:rotate(-40deg);transform-origin:100% 0%;">2012-…</span>
<span class="t" style="left:793.60px;top:934.50px;width:49.5px;font-size:13.5px;line-height:13.5px;color:#595959;letter-spacing:0.294px;transform:rotate(-40deg);transform-origin:100% 0%;">2012-…</span>
<span class="t" style="left:828.60px;top:934.50px;width:49.5px;font-size:13.5px;line-height:13.5px;color:#595959;letter-spacing:0.294px;transform:rotate(-40deg);transform-origin:100% 0%;">2012-…</span>
<span class="t" style="left:863.60px;top:934.50px;width:49.5px;font-size:13.5px;line-height:13.5px;color:#595959;letter-spacing:0.294px;transform:rotate(-40deg);transform-origin:100% 0%;">2012-…</span>
<span class="t" style="left:894.10px;top:934.50px;width:54px;font-size:13.5px;line-height:13.5px;color:#595959;letter-spacing:0.316px;transform:rotate(-40deg);transform-origin:100% 0%;">2012-Jul</span>
<span class="t" style="left:933.60px;top:934.50px;width:49.5px;font-size:13.5px;line-height:13.5px;color:#595959;letter-spacing:0.294px;transform:rotate(-40deg);transform-origin:100% 0%;">2012-…</span>
<span class="t" style="left:968.60px;top:934.50px;width:49.5px;font-size:13.5px;line-height:13.5px;color:#595959;letter-spacing:0.294px;transform:rotate(-40deg);transform-origin:100% 0%;">2012-…</span>
<span class="t" style="left:1003.60px;top:934.50px;width:49.5px;font-size:13.5px;line-height:13.5px;color:#595959;letter-spacing:0.294px;transform:rotate(-40deg);transform-origin:100% 0%;">2012-…</span>
<span class="t" style="left:1038.60px;top:934.50px;width:49.5px;font-size:13.5px;line-height:13.5px;color:#595959;letter-spacing:0.294px;transform:rotate(-40deg);transform-origin:100% 0%;">2012-…</span>
<span class="t" style="left:1073.60px;top:934.50px;width:49.5px;font-size:13.5px;line-height:13.5px;color:#595959;letter-spacing:0.294px;transform:rotate(-40deg);transform-origin:100% 0%;">2012-…</span>
<span class="t" style="left:1108.60px;top:934.50px;width:49.5px;font-size:13.5px;line-height:13.5px;color:#595959;letter-spacing:0.294px;transform:rotate(-40deg);transform-origin:100% 0%;">2013-…</span>
<span class="t" style="left:1143.60px;top:934.50px;width:49.5px;font-size:13.5px;line-height:13.5px;color:#595959;letter-spacing:0.294px;transform:rotate(-40deg);transform-origin:100% 0%;">2013-…</span>
<span class="t" style="left:1178.60px;top:934.50px;width:49.5px;font-size:13.5px;line-height:13.5px;color:#595959;letter-spacing:0.294px;transform:rotate(-40deg);transform-origin:100% 0%;">2013-…</span>
<span class="t" style="left:1213.60px;top:934.50px;width:49.5px;font-size:13.5px;line-height:13.5px;color:#595959;letter-spacing:0.294px;transform:rotate(-40deg);transform-origin:100% 0%;">2013-…</span>
<span class="t" style="left:1248.60px;top:934.50px;width:49.5px;font-size:13.5px;line-height:13.5px;color:#595959;letter-spacing:0.294px;transform:rotate(-40deg);transform-origin:100% 0%;">2013-…</span>
<span class="t" style="left:1283.60px;top:934.50px;width:49.5px;font-size:13.5px;line-height:13.5px;color:#595959;letter-spacing:0.294px;transform:rotate(-40deg);transform-origin:100% 0%;">2013-…</span>
<span class="t" style="left:1314.10px;top:934.50px;width:54px;font-size:13.5px;line-height:13.5px;color:#595959;letter-spacing:0.316px;transform:rotate(-40deg);transform-origin:100% 0%;">2013-Jul</span>
<span class="t" style="left:1353.60px;top:934.50px;width:49.5px;font-size:13.5px;line-height:13.5px;color:#595959;letter-spacing:0.294px;transform:rotate(-40deg);transform-origin:100% 0%;">2013-…</span>
<span class="t" style="left:1388.60px;top:934.50px;width:49.5px;font-size:13.5px;line-height:13.5px;color:#595959;letter-spacing:0.294px;transform:rotate(-40deg);transform-origin:100% 0%;">2013-…</span>
<span class="t" style="left:1423.60px;top:934.50px;width:49.5px;font-size:13.5px;line-height:13.5px;color:#595959;letter-spacing:0.294px;transform:rotate(-40deg);transform-origin:100% 0%;">2013-…</span>
<span class="t" style="left:1458.60px;top:934.50px;width:49.5px;font-size:13.5px;line-height:13.5px;color:#595959;letter-spacing:0.294px;transform:rotate(-40deg);transform-origin:100% 0%;">2013-…</span>
<span class="t" style="left:1493.60px;top:934.50px;width:49.5px;font-size:13.5px;line-height:13.5px;color:#595959;letter-spacing:0.294px;transform:rotate(-40deg);transform-origin:100% 0%;">2013-…</span>
<span class="t" style="left:1528.60px;top:934.50px;width:49.5px;font-size:13.5px;line-height:13.5px;color:#595959;letter-spacing:0.294px;transform:rotate(-40deg);transform-origin:100% 0%;">2014-…</span>
<span class="t" style="left:1563.60px;top:934.50px;width:49.5px;font-size:13.5px;line-height:13.5px;color:#595959;letter-spacing:0.294px;transform:rotate(-40deg);transform-origin:100% 0%;">2014-…</span>
<span class="t" style="left:1598.60px;top:934.50px;width:49.5px;font-size:13.5px;line-height:13.5px;color:#595959;letter-spacing:0.294px;transform:rotate(-40deg);transform-origin:100% 0%;">2014-…</span>
<span class="t" style="left:1633.60px;top:934.50px;width:49.5px;font-size:13.5px;line-height:13.5px;color:#595959;letter-spacing:0.294px;transform:rotate(-40deg);transform-origin:100% 0%;">2014-…</span>
</div>
<div class="a" style="left:1803px;top:0px;width:1px;height:1017px;background:#fbfbfb;"></div>
<div class="a" style="left:1804px;top:0px;width:1px;height:1017px;background:#8c8c8c;"></div>
<div class="a" style="left:0px;top:1015px;width:1805px;height:1px;background:#fdfdfd;"></div>
<div class="a" style="left:0px;top:1016px;width:1805px;height:1px;background:#7d7d7d;"></div>
<svg class="a" style="left:0px;top:1005px;" width="12" height="12" viewBox="0 0 12 12"><path d="M0 0 V12 H12 V11 H9 Q1 11 1 3 V0 Z" fill="#7d7d7d"/><path d="M0.5 0 V3 Q0.5 10.5 9 10.5" fill="none" stroke="#fdfdfd" stroke-width="1"/></svg>
<svg class="a" style="left:1793px;top:1005px;" width="12" height="12" viewBox="0 0 12 12"><path d="M12 0 V12 H0 V11 H3 Q11 11 11 3 V0 Z" fill="#7d7d7d"/><path d="M10.5 0 V3 Q10.5 10.5 3 10.5" fill="none" stroke="#fdfdfd" stroke-width="1"/></svg>
</div></body></html>
